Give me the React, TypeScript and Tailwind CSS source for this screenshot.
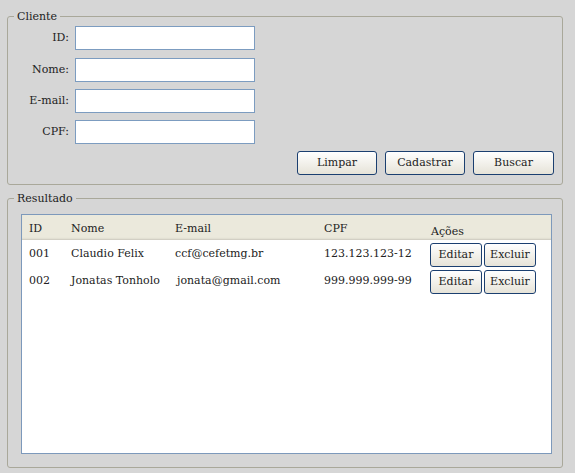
import React from 'react';

// Swing-like client form
const clientes = [
  { id: '001', nome: 'Claudio Felix', email: 'ccf@cefetmg.br', cpf: '123.123.123-12' },
  { id: '002', nome: 'Jonatas Tonholo', email: 'jonata@gmail.com', cpf: '999.999.999-99' },
];

const SwingButton = ({ label, className = '' }: { label: string; className?: string }) => (
  <button
    className={`h-6 rounded-[3px] border border-[#1b3f70] bg-gradient-to-b from-white to-[#e6e3d8] text-[11px] text-[#222] [font-family:'DejaVu_Serif',serif] ${className}`}
  >
    {label}
  </button>
);

const campos = [
  { label: 'ID:', mt: 'mt-0', shift: '' },
  { label: 'Nome:', mt: 'mt-2', shift: '-ml-px' },
  { label: 'E-mail:', mt: 'mt-[7px]', shift: '' },
  { label: 'CPF:', mt: 'mt-[7px]', shift: '' },
];

export default function App() {
  return (
    <div className="w-[575px] h-[473px] bg-[#d6d6d6] px-[7px] pt-[10px] [font-family:'DejaVu_Serif',serif] text-[11px] text-[#222]">
      {/* Cliente */}
      <fieldset className="w-[556px] h-[175px] rounded-[3px] border border-[#a9a89a]">
        <legend className="ml-[6px] px-[3px] leading-[13px]">Cliente</legend>
        <div className="mt-[3px] flex flex-col">
          {campos.map((c) => (
            <div key={c.label} className={`flex items-center ${c.mt}`}>
              <span className="w-[61px] text-right">{c.label}</span>
              <input
                className={`ml-[6px] h-6 w-[180px] border border-[#7c9cc0] bg-white ${c.shift}`}
              />
            </div>
          ))}
          <div className="mt-[7px] flex gap-2 pl-[289px]">
            <SwingButton label="Limpar" className="w-[80px]" />
            <SwingButton label="Cadastrar" className="w-[80px]" />
            <SwingButton label="Buscar" className="w-[81px]" />
          </div>
        </div>
      </fieldset>

      {/* Resultado */}
      <fieldset className="mt-[7px] w-[556px] h-[276px] rounded-[3px] border border-[#a9a89a]">
        <legend className="ml-[6px] px-[3px] leading-[13px]">Resultado</legend>
        <div className="ml-[13px] mt-[9px] h-[240px] w-[531px] border border-[#7d99bb] bg-white">
          <div className="flex h-[25px] items-end bg-[#ebe9dc] pb-[3px] shadow-[inset_0_-2px_2px_-1px_#c9c7bb]">
            <span className="w-[49px] pl-[7px]">ID</span>
            <span className="w-[104px]">Nome</span>
            <span className="w-[149px]">E-mail</span>
            <span className="w-[107px]">CPF</span>
            <span className="relative top-[3px]">Ações</span>
          </div>
          {clientes.map((c, i) => (
            <div key={c.id} className="mt-[3px] flex h-6 items-center">
              <span className="w-[49px] pl-[7px] relative -top-px">{c.id}</span>
              <span className="w-[104px] relative -top-px">{c.nome}</span>
              <span className={`w-[149px] relative -top-px ${i === 1 ? 'pl-[2px]' : ''}`}>{c.email}</span>
              <span className="w-[106px] relative -top-px">{c.cpf}</span>
              <SwingButton label="Editar" className="w-[52px]" />
              <SwingButton label="Excluir" className="ml-[2px] w-[52px]" />
            </div>
          ))}
        </div>
      </fieldset>
    </div>
  );
}
